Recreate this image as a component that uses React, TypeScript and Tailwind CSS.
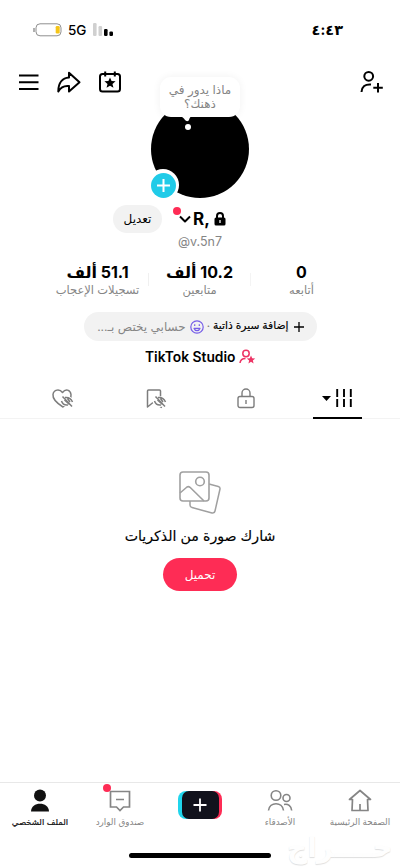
import React from "react";

const S = ({ w, h, vb, className = "", children }: { w: number; h: number; vb?: string; className?: string; children: React.ReactNode }) => (
  <svg width={w} height={h} viewBox={vb ?? `0 0 ${w} ${h}`} className={"block shrink-0 " + className} fill="none" stroke="currentColor" strokeWidth={2} strokeLinejoin="round">
    {children}
  </svg>
);

const STAR = "M0 -5L1.4 -1.7L5 -1.5L2.2 .8L3.1 4.3L0 2.4L-3.1 4.3L-2.2 .8L-5 -1.5L-1.4 -1.7Z";

function StatusBar() {
  return (
    <div className="flex h-[60px] items-center justify-between pl-[33px] pr-[57px]">
      <div className="flex items-center">
        <S w={29} h={14}>
          <rect x="3" y=".8" width="25" height="12" rx="4" stroke="#8f8f8f" strokeWidth="1" />
          <path d="M1 5v4" stroke="#8f8f8f" strokeWidth="1.4" />
          <rect x="22.7" y="3" width="4" height="7.6" rx="1.3" fill="#f5c518" stroke="none" />
        </S>
        <span className="ml-[6px] text-[13.500px] font-medium leading-[14px]">5G</span>
        <S w={22} h={14} className="ml-[7px]">
          <g stroke="none" fill="#000">
            <rect x="0" y="0" width="3.600" height="13" rx="1.200" fill="#d0d0d0" />
            <rect x="5.500" y="3" width="3.600" height="10" rx="1.200" fill="#d0d0d0" />
            <rect x="11" y="6" width="3.600" height="7" rx="1.200" />
            <rect x="16.400" y="8.400" width="3.600" height="4.600" rx="1.200" />
          </g>
        </S>
      </div>
      <span className="text-[14.500px] font-bold leading-[16px]">٤:٤٣</span>
    </div>
  );
}

function Header() {
  return (
    <div className="flex h-[142px] items-start justify-between pl-[18px] pr-[16px] pt-[10px]">
      <div className="flex gap-[17px]">
        <S w={22} h={24}><path d="M1 5.500h19.500M1 12.300h19.500M1 19h19.500" /></S>
        <S w={25} h={24}>
          <path d="M12 2.800L22.500 12.300L12 21.500v-5.500C7 15.400 3.500 17.500 1.300 21.400C1.300 13 5.500 8 12 7.500Z" />
        </S>
        <S w={24} h={24}>
          <rect x="1" y="4" width="20" height="17.500" rx="2.500" />
          <path d="M6.200 1.500v5M15.800 1.500v5" />
          <path d={STAR} transform="translate(11 13) scale(1.120)" fill="currentColor" stroke="none" />
        </S>
      </div>
      <S w={24} h={24}>
        <circle cx="8.700" cy="6.300" r="4.400" />
        <path d="M1.500 22c.400-5.300 3.500-8 9.500-7.500M18 13v9.500M13.300 17.700h9.500" />
      </S>
    </div>
  );
}

function Avatar() {
  return (
    <div className="absolute left-[151px] top-[100px] h-[98px] w-[98px] rounded-full bg-black">
      <div dir="rtl" className="absolute left-[9px] top-[-23px] flex h-[40px] w-[80px] flex-col items-center justify-center rounded-[11px] bg-white text-[12px] leading-[14.500px] text-[#858585] shadow-[0_0_8px_rgba(0,0,0,0.06)]">
        <span className="whitespace-nowrap">ماذا يدور في</span>
        <span className="whitespace-nowrap">ذهنك؟</span>
      </div>
      <S w={12} h={7} className="absolute left-[29px] top-[16px]">
        <path d="M0 0h12c-2 1-2.500 2-3 4c-.500 1.500-3 1.500-4 0c-1-2-2.500-3-5-4Z" fill="#fff" stroke="none" />
      </S>
      <div className="absolute left-[34px] top-[24px] h-[6px] w-[6px] rounded-full bg-white" />
      <div className="absolute left-[-4px] top-[69px] flex h-[32px] w-[32px] items-center justify-center rounded-full bg-white">
        <div className="flex h-[25px] w-[25px] items-center justify-center rounded-full bg-[#20cbe8] text-white">
          <S w={13} h={13}><path d="M6.500 0v13M0 6.500h13" /></S>
        </div>
      </div>
    </div>
  );
}

function Stat({ value, label }: { value: string; label: string }) {
  return (
    <div dir="rtl" className="flex w-[101px] flex-col items-center whitespace-nowrap">
      <span className="text-[16px] font-bold leading-[20px]">{value}</span>
      <span className="text-[11.500px] leading-[16px] text-[#858585]">{label}</span>
    </div>
  );
}

const Slash = () => (
  <>
    <path d="M10.500 13.500c3-4.500 8-4.500 11 0c-3 4.500-8 4.500-11 0Z" stroke="#fff" strokeWidth="4" fill="#fff" />
    <path d="M10.500 13c1 3 3.500 4.500 6.500 4M14 9.500c3.500-.500 6 1 7.500 4.500M11.500 8.500l9.500 10M13.500 12l5 4.500M16.500 10.500l2.500 3.500" strokeWidth="1.500" />
  </>
);

function NavItem({ label, children, active }: { label: string; children: React.ReactNode; active?: boolean }) {
  return (
    <div className={"flex w-[80px] flex-col items-center " + (active ? "text-[#111]" : "text-[#858585]")}>
      {children}
      <span dir="rtl" className={"mt-[2px] whitespace-nowrap leading-[14px] " + (active ? "text-[8.500px] [-webkit-text-stroke:0.2px_#111]" : "text-[8.800px]")}>{label}</span>
    </div>
  );
}

export default function App() {
  return (
    <div className="relative flex h-[867px] w-[400px] flex-col overflow-hidden bg-white font-['Inter','DejaVu_Sans',sans-serif] text-black">
      <StatusBar />
      <Header />
      <Avatar />
      <div className="flex h-[34px] items-center pl-[113px]">
        <div dir="rtl" className="flex h-[28px] w-[49px] items-center justify-center rounded-full bg-[#f2f2f2] text-[12px]">تعديل</div>
        <div className="relative ml-[16px] flex items-center">
          <S w={14} h={12}><path d="M2 3.500l5 5l5-5" /></S>
          <div className="absolute left-[-5px] top-[-2px] h-[8px] w-[8px] rounded-full bg-[#fe2c55]" />
          <span className="ml-[1px] text-[17px] font-bold leading-[20px]">R,</span>
          <S w={12} h={14} className="ml-[4px]">
            <rect x=".500" y="5.500" width="11" height="8" rx="1.500" fill="#000" stroke="none" />
            <path d="M3 6V4a3 3 0 0 1 6 0v2" />
            <path d="M6 8v3" stroke="#fff" strokeWidth="1.300" />
          </S>
        </div>
      </div>
      <div className="h-[26px] text-center text-[12.500px] leading-[11px] text-[#858585]">@v.5n7</div>
      <div className="flex h-[50px] items-start pl-[47px]">
        <Stat value="51.1 ألف" label="تسجيلات الإعجاب" />
        <div className="mt-[11px] h-[13px] w-px bg-[#f0f0f0]" />
        <Stat value="10.2 ألف" label="متابعين" />
        <div className="mt-[11px] h-[13px] w-px bg-[#f4f4f4]" />
        <Stat value="0" label="أتابعه" />
      </div>
      <div dir="rtl" className="mx-auto flex h-[29px] w-[233px] items-center whitespace-nowrap rounded-full bg-[#f2f2f2] pr-[13px] text-[11.500px]">
        <S w={10} h={10}><path d="M5 0v10M0 5h10" strokeWidth="1.300" /></S>
        <span className="mr-[5px] text-[10.700px] [-webkit-text-stroke:0.15px_#000]">إضافة سيرة ذاتية</span>
        <span className="mx-[3px] text-[#777]">·</span>
        <S w={14} h={14}>
          <g stroke="#765ee8" strokeWidth="1.200">
            <circle cx="7" cy="7" r="6.200" />
            <path d="M4.700 4.300v1.700M9.300 4.300v1.700M4 8.300c1 3.200 5 3.200 6 0Z" />
          </g>
        </S>
        <span className="mr-[4px] text-[12px] text-[#858585]">حسابي يختص بـ...</span>
      </div>
      <div className="mt-[6px] flex h-[20px] items-center pl-[145px]">
        <span className="whitespace-nowrap text-[13.800px] font-semibold leading-[20px]">TikTok Studio</span>
        <S w={17} h={16} className="ml-[4px] text-[#ed3465]">
          <circle cx="7" cy="4.500" r="3.200" strokeWidth="1.500" />
          <path d="M1 14c.300-3.300 2.500-4.500 5.500-4.500" strokeWidth="1.500" />
          <path d={STAR} transform="translate(12 10.800) scale(.840)" fill="currentColor" stroke="none" />
        </S>
      </div>
      <div className="mt-[11px] flex h-[41px] items-start border-b border-[#f3f3f3] text-[#7d7d7d]">
        <div className="flex w-[125px] justify-center pt-[10px]">
          <S w={24} h={22}>
            <path d="M12 19C4 14 1.500 10.500 2 6.500C2.700 1.500 8.500.500 11.500 4.500C14.500.500 19.300 1.500 20 6.500C20.400 10 18 15 12 19Z" strokeWidth="1.500" />
            <Slash />
          </S>
        </div>
        <div className="flex w-[62px] justify-center pt-[10px]">
          <S w={24} h={22}>
            <path d="M9 14.500L3.500 19V3Q3.500 2 4.500 2H15.500Q16.500 2 16.500 3V9M16 18.500l2 1" strokeWidth="1.500" />
            <Slash />
          </S>
        </div>
        <div className="flex w-[117px] justify-center pt-[10px]">
          <S w={18} h={21}>
            <rect x="1" y="8.500" width="16" height="11" rx="2" strokeWidth="1.400" />
            <path d="M5 8.500V5a4 4 0 0 1 8 0v3.500M9 12v4" strokeWidth="1.400" />
          </S>
        </div>
        <div className="ml-[9px] flex h-[41px] w-[49px] items-start justify-center border-b-2 border-black pr-[2px] pt-[10px] text-black">
          <S w={32} h={20}>
            <path d="M1 8h9l-4.500 5Z" fill="#000" stroke="none" />
            <path d="M16.200 1v8M23 1v8M29.800 1v8M16.200 11v8M23 11v8M29.800 11v8" strokeWidth="1.900" />
          </S>
        </div>
      </div>
      <div className="flex flex-1 flex-col items-center pt-[50px]">
        <S w={44} h={46} className="text-[#a0a0a0]">
          <path d="M12 31v5q0 2 2 2.500l20 5.500q2.500.500 3-2l5-22q.300-2-1.700-2.500L31 15" strokeWidth="1.500" />
          <rect x="2" y="3" width="29" height="29" rx="3" fill="#fff" strokeWidth="1.600" />
          <circle cx="22" cy="12.500" r="4.300" strokeWidth="1.600" />
          <path d="M2 24l7-6q1.500-1 3 .300L26 32" strokeWidth="1.600" />
        </S>
        <span dir="rtl" className="mt-[11px] whitespace-nowrap text-[14.200px] leading-[20px] [-webkit-text-stroke:0.15px_#000]">شارك صورة من الذكريات</span>
        <button dir="rtl" className="mt-[12px] h-[33px] w-[74px] rounded-full bg-[#fe2c55] text-[12px] text-white">تحميل</button>
      </div>
      <div className="relative flex h-[85px] items-start border-t border-[#e8e8e8] pt-[6px]">
        <NavItem label="الملف الشخصي" active>
          <S w={24} h={24}>
            <g fill="currentColor" stroke="none">
              <circle cx="12" cy="6.500" r="6" />
              <path d="M3 22.500c0-10.500 18-10.500 18 0Z" />
            </g>
          </S>
        </NavItem>
        <NavItem label="صندوق الوارد">
          <div className="relative">
            <S w={24} h={24}><path d="M2.500 2.500h19v15.500h-6l-3.500 3.500l-3.500-3.500h-6ZM8 10.500h8" strokeWidth="1.700" strokeLinejoin="miter" /></S>
            <div className="absolute left-[-5px] top-[-5px] h-[8px] w-[8px] rounded-full bg-[#fe2c55]" />
          </div>
        </NavItem>
        <div className="flex w-[80px] justify-center pt-[2px]">
          <div className="flex h-[28px] w-[44px] justify-center rounded-[8px] bg-linear-to-r from-[#20d5ec] from-50% to-[#fe2c55] to-50%">
            <div className="flex h-[28px] w-[37px] items-center justify-center rounded-[7px] bg-[#11121c] text-white">
              <S w={14} h={14}><path d="M7 .500v13M.500 7h13" strokeWidth="1.800" /></S>
            </div>
          </div>
        </div>
        <NavItem label="الأصدقاء">
          <S w={26} h={24}>
            <g strokeWidth="1.600">
              <circle cx="9" cy="6.500" r="4.800" />
              <circle cx="19.500" cy="9" r="3.500" />
              <path d="M1.500 21.500c1-9 14-9 15 0M17 15.500c4-1 7.200 1.500 7.700 6" />
            </g>
          </S>
        </NavItem>
        <NavItem label="الصفحة الرئيسية">
          <S w={24} h={24}><path d="M4.500 10.500H1.500L12 1.500L22.500 10.500H19.500L20 21.500H4ZM12 15v6.500" strokeWidth="1.700" /></S>
        </NavItem>
        <div className="absolute left-[129px] top-[70px] h-[5px] w-[142px] rounded-full bg-black" />
        <div dir="rtl" className="absolute left-[287px] top-[48px] whitespace-nowrap text-[28px] font-bold leading-[32px] text-[#fefefe] [text-shadow:0_1px_1px_#dedede]">حــــراج</div>
      </div>
    </div>
  );
}
